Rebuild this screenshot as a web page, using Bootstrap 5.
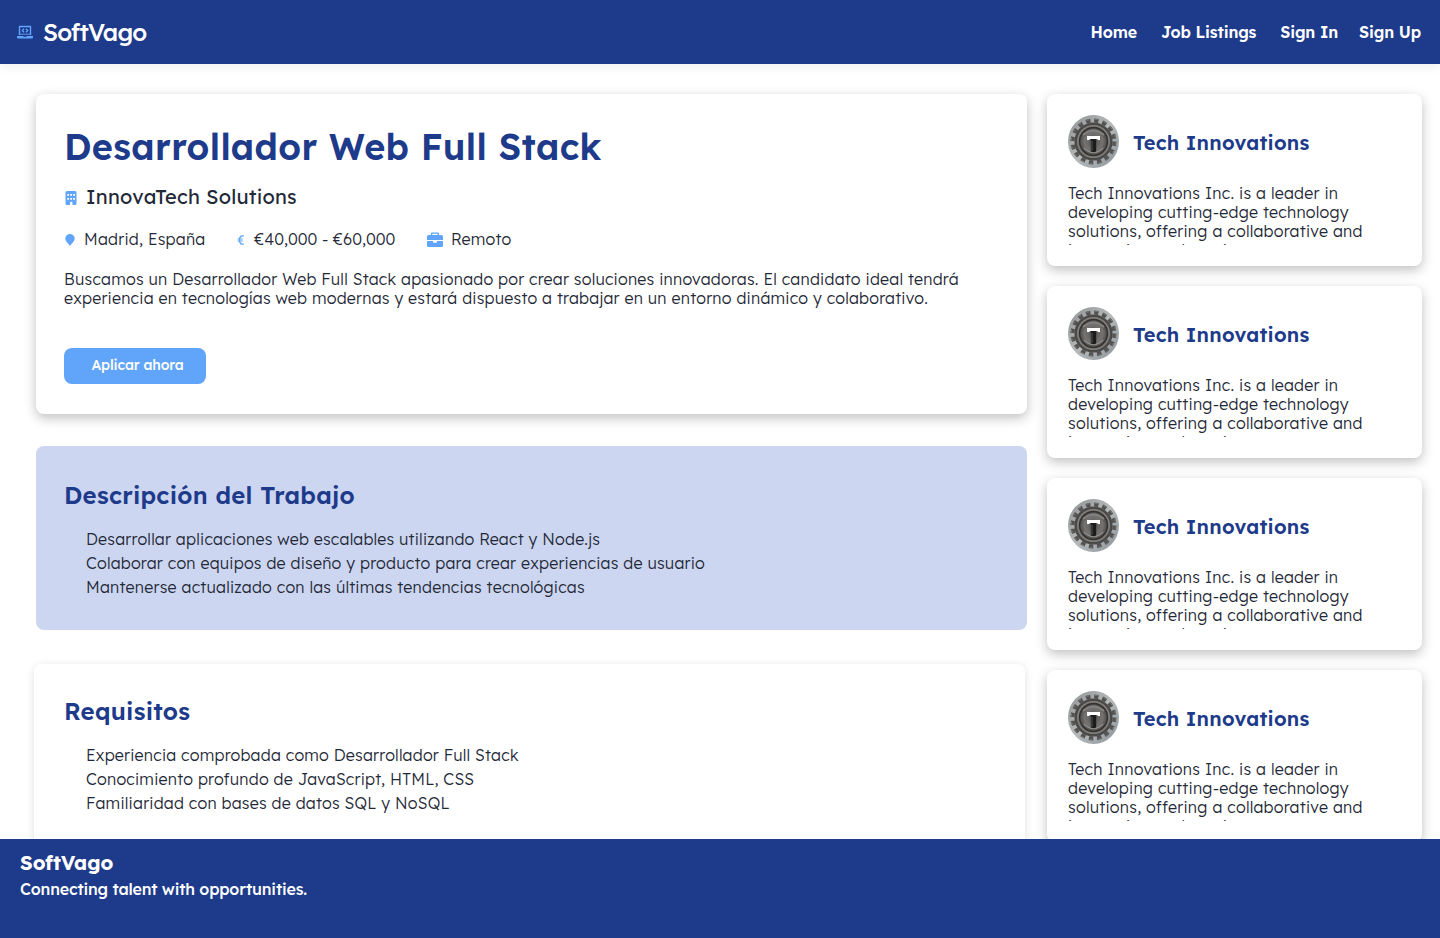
<!DOCTYPE html>
<html lang="es">
<head>
<meta charset="utf-8">
<meta name="viewport" content="width=device-width, initial-scale=1">
<title>SoftVago</title>
<link href="https://cdn.jsdelivr.net/npm/bootstrap@5.3.0/dist/css/bootstrap.min.css" rel="stylesheet">
<style>
:root { --navy: #1e3a8a; --sky: #60a5fa; --ink: #1f2937; }
body { font-family: Lexend, Inter, "Open Sans", sans-serif; font-size: 16px; line-height: 19px; font-weight: 300; letter-spacing: .225px; color: var(--ink); height: 938px; overflow: hidden; background: #fff; }
.topbar { height: 64px; background: var(--navy); padding: 0 19px 0 17px; box-shadow: 0 4px 10px rgba(0,0,0,.05); }
.brand-name { font-size: 24px; line-height: 32px; font-weight: 500; letter-spacing: -.85px; margin-left: 10px; }
.topbar nav { gap: 24px; }
.topbar a { color: #fff; font-weight: 600; text-decoration: none; line-height: 24px; letter-spacing: -.15px; white-space: nowrap; }
.page-body { padding: 30px 18px 0 36px; gap: 20px; }
.main-col { width: 991px; }
.side-col { width: 375px; gap: 20px; }
.panel { border-radius: 8px; background: #fff; padding: 0 28px; }
.raised { box-shadow: 0 4px 12px rgba(0,0,0,.25); }
.hero { height: 320px; padding-top: 30px; }
.hero h1 { font-size: 36px; line-height: 45px; font-weight: 600; letter-spacing: .36px; color: var(--navy); margin: 0; }
.company { font-size: 20px; line-height: 24px; font-weight: 400; letter-spacing: .24px; margin-top: 16px; }
.facts { margin-top: 21px; height: 19px; }
.fact-city { margin-left: 8px; width: 153px; }
.fact-pay { margin-left: 9px; width: 173px; letter-spacing: 0; }
.intro { margin-top: 21px; white-space: nowrap; }
.apply { width: 142px; height: 36px; margin-top: 40px; padding: 0 0 1px 5px; border: 0; border-radius: 8px; background: var(--sky); color: #fff; font-size: 14px; font-weight: 500; letter-spacing: -.15px; }
.apply:hover { background: #3b82f6; color: #fff; }
.duties { height: 184px; margin-top: 32px; padding-top: 34px; background: #cdd6f1; }
.needs { height: 184px; margin: 34px 2px 0 -2px; padding: 32px 30px 0; box-shadow: 0 2px 10px rgba(0,0,0,.12); }
.panel h2 { font-size: 24px; line-height: 30px; font-weight: 600; letter-spacing: .25px; color: var(--navy); margin: 0; }
.panel ul { list-style: none; margin: 17px 0 0; padding: 0 0 0 22px; line-height: 24px; }
.firm { height: 172px; padding: 21px; }
.firm h3 { font-size: 20px; line-height: 25px; font-weight: 600; letter-spacing: .21px; color: var(--navy); margin: 1px 0 0 14px; }
.firm p { margin: 16px 0 0; height: 61px; overflow: hidden; letter-spacing: .25px; }
.site-foot { height: 99px; background: var(--navy); color: #fff; padding: 12px 20px; }
.foot-name { font-size: 20px; line-height: 24px; font-weight: 700; letter-spacing: 0; }
.foot-line { font-weight: 500; line-height: 20px; letter-spacing: -.17px; margin-top: 4px; }
</style>
</head>
<body>
<svg class="position-absolute" width="0" height="0" aria-hidden="true">
  <defs>
    <linearGradient id="steel" x1="0" y1="0" x2="1" y2="1"><stop offset="0" stop-color="#8e9293"/><stop offset=".5" stop-color="#b6babb"/><stop offset="1" stop-color="#8a949b"/></linearGradient>
    <radialGradient id="hub"><stop offset="0" stop-color="#585654"/><stop offset=".65" stop-color="#757371"/><stop offset="1" stop-color="#4a4948"/></radialGradient>
  </defs>
  <symbol id="gear" viewBox="0 0 51 53">
    <ellipse cx="25.5" cy="26.5" rx="25.5" ry="26.5" fill="url(#steel)"/>
    <circle cx="25.5" cy="26.5" r="21" fill="none" stroke="#555351" stroke-width="4" stroke-dasharray="4.4 3.85"/>
    <circle cx="25.5" cy="26.5" r="22.3" fill="none" stroke="#85837f" stroke-width="1" stroke-dasharray="2.4 6.36" stroke-dashoffset="-1"/>
    <circle cx="25.5" cy="26.5" r="17.8" fill="#817f7c" stroke="#4c4a48" stroke-width="2.6"/>
    <circle cx="25.5" cy="26.5" r="14" fill="url(#hub)" stroke="#333231" stroke-width="1.500"/>
    <path d="M15 20q10.500-9 21 0" fill="none" stroke="#85827f" stroke-width="1.800"/>
    <path d="M16 33q9.500 9 19 0" fill="none" stroke="#918e8a" stroke-width="1.200"/>
    <path d="M22.800 24h5.400v12.500q-2.700 1.500-5.400 0z" fill="#1c1c1c"/>
    <path d="M24 26v10" stroke="#666" stroke-width=".8"/>
    <path d="M19 21h13v4h-2.500v-1h-8v1H19z" fill="#fff"/>
  </symbol>
</svg>

<header class="topbar d-flex align-items-center position-relative">
  <svg width="16" height="14" viewBox="0 0 16 14" fill="none" stroke="#60a5fa"><path d="M2.500 10V1.500h11V10" stroke-width="1.400"/><path d="M7 3.700L5.300 5.500 7 7.300M9 3.700l1.700 1.800L9 7.300" stroke-width="1.300"/><path d="M3 9.200h10" stroke-width=".9"/><path d="M0 11h6l.5.8h3L10 11h6v1.300q0 1.200-1.200 1.200H1.200Q0 13.500 0 12.300z" fill="#60a5fa" stroke="none"/></svg>
  <span class="brand-name text-white">SoftVago</span>
  <nav class="d-flex ms-auto">
    <a href="#">Home</a><a href="#">Job Listings</a><a href="#">Sign In</a><a href="#" style="margin-left:-3px">Sign Up</a>
  </nav>
</header>

<main class="page-body d-flex align-items-start">
  <div class="main-col flex-shrink-0">
    <section class="panel hero raised">
      <h1>Desarrollador Web Full Stack</h1>
      <div class="company d-flex align-items-center">
        <svg class="me-2 mt-1" width="14" height="16" viewBox="0 0 14 16"><path fill="#60a5fa" fill-rule="evenodd" d="M3 0h8q1.500 0 1.500 1.500v11q0 1.500-1.500 1.500H8.500v-2q0-1.300-1.300-1.300T6 12v2H3q-1.500 0-1.500-1.500v-11Q1.500 0 3 0zM3.200 3h1.800v1.800H3.200zm3 0H8v1.800H6.200zm3 0H11v1.800H9.200zM3.200 7h1.800v1.800H3.200zm3 0H8v1.800H6.200zm3 0H11v1.800H9.200z"/></svg>
        <span>InnovaTech Solutions</span>
      </div>
      <div class="facts d-flex align-items-center">
        <svg width="12" height="12" viewBox="0 0 12 12"><path fill="#60a5fa" d="M6 0a4.700 4.700 0 0 0-4.700 4.600C1.300 7.200 4.500 10 6 12c1.500-2 4.700-4.800 4.700-7.400A4.700 4.700 0 0 0 6 0z"/></svg>
        <span class="fact-city">Madrid, España</span>
        <svg width="8" height="10" viewBox="0 0 8 10" fill="none" stroke="#60a5fa"><path d="M6.800 1.200C4 .2 2.500 2 2.500 5s1.500 4.800 4.300 3.800" stroke-width="1.400"/><path d="M.5 4h5.300M.5 6h5.300" stroke-width="1.100"/></svg>
        <span class="fact-pay">€40,000 - €60,000</span>
        <svg width="16" height="16" viewBox="0 0 16 16" fill="#60a5fa"><path fill-rule="evenodd" d="M4 3V1.500Q4 .5 5 .5h6q1 0 1 1V3h2.500Q16 3 16 4.500V8H0V4.500Q0 3 1.500 3zm1.300 0h5.400V1.700H5.300z"/><path d="M0 9h6v1q0 .7.700.7h2.600q.7 0 .7-.7V9h6v4.500q0 1.500-1.500 1.500h-13Q0 15 0 13.500z"/></svg>
        <span class="ms-2">Remoto</span>
      </div>
      <p class="mb-0 intro">Buscamos un Desarrollador Web Full Stack apasionado por crear soluciones innovadoras. El candidato ideal tendrá<br>experiencia en tecnologías web modernas y estará dispuesto a trabajar en un entorno dinámico y colaborativo.</p>
      <button class="btn apply" type="button">Aplicar ahora</button>
    </section>
    <section class="panel duties">
      <h2>Descripción del Trabajo</h2>
      <ul><li>Desarrollar aplicaciones web escalables utilizando React y Node.js</li><li>Colaborar con equipos de diseño y producto para crear experiencias de usuario</li><li>Mantenerse actualizado con las últimas tendencias tecnológicas</li></ul>
    </section>
    <section class="panel needs">
      <h2>Requisitos</h2>
      <ul><li>Experiencia comprobada como Desarrollador Full Stack</li><li>Conocimiento profundo de JavaScript, HTML, CSS</li><li>Familiaridad con bases de datos SQL y NoSQL</li></ul>
    </section>
  </div>
  <aside class="side-col d-flex flex-column flex-shrink-0">
    <article class="panel firm raised"><div class="d-flex align-items-center"><svg width="51" height="53"><use href="#gear"/></svg><h3>Tech Innovations</h3></div><p>Tech Innovations Inc. is a leader in<br>developing cutting-edge technology<br>solutions, offering a collaborative and<br>innovative work environment.</p></article>
    <article class="panel firm raised"><div class="d-flex align-items-center"><svg width="51" height="53"><use href="#gear"/></svg><h3>Tech Innovations</h3></div><p>Tech Innovations Inc. is a leader in<br>developing cutting-edge technology<br>solutions, offering a collaborative and<br>innovative work environment.</p></article>
    <article class="panel firm raised"><div class="d-flex align-items-center"><svg width="51" height="53"><use href="#gear"/></svg><h3>Tech Innovations</h3></div><p>Tech Innovations Inc. is a leader in<br>developing cutting-edge technology<br>solutions, offering a collaborative and<br>innovative work environment.</p></article>
    <article class="panel firm raised"><div class="d-flex align-items-center"><svg width="51" height="53"><use href="#gear"/></svg><h3>Tech Innovations</h3></div><p>Tech Innovations Inc. is a leader in<br>developing cutting-edge technology<br>solutions, offering a collaborative and<br>innovative work environment.</p></article>
  </aside>
</main>

<footer class="site-foot fixed-bottom">
  <div class="foot-name">SoftVago</div>
  <div class="foot-line">Connecting talent with opportunities.</div>
</footer>
<script src="https://cdn.jsdelivr.net/npm/bootstrap@5.3.0/dist/js/bootstrap.bundle.min.js"></script>
</body>
</html>
